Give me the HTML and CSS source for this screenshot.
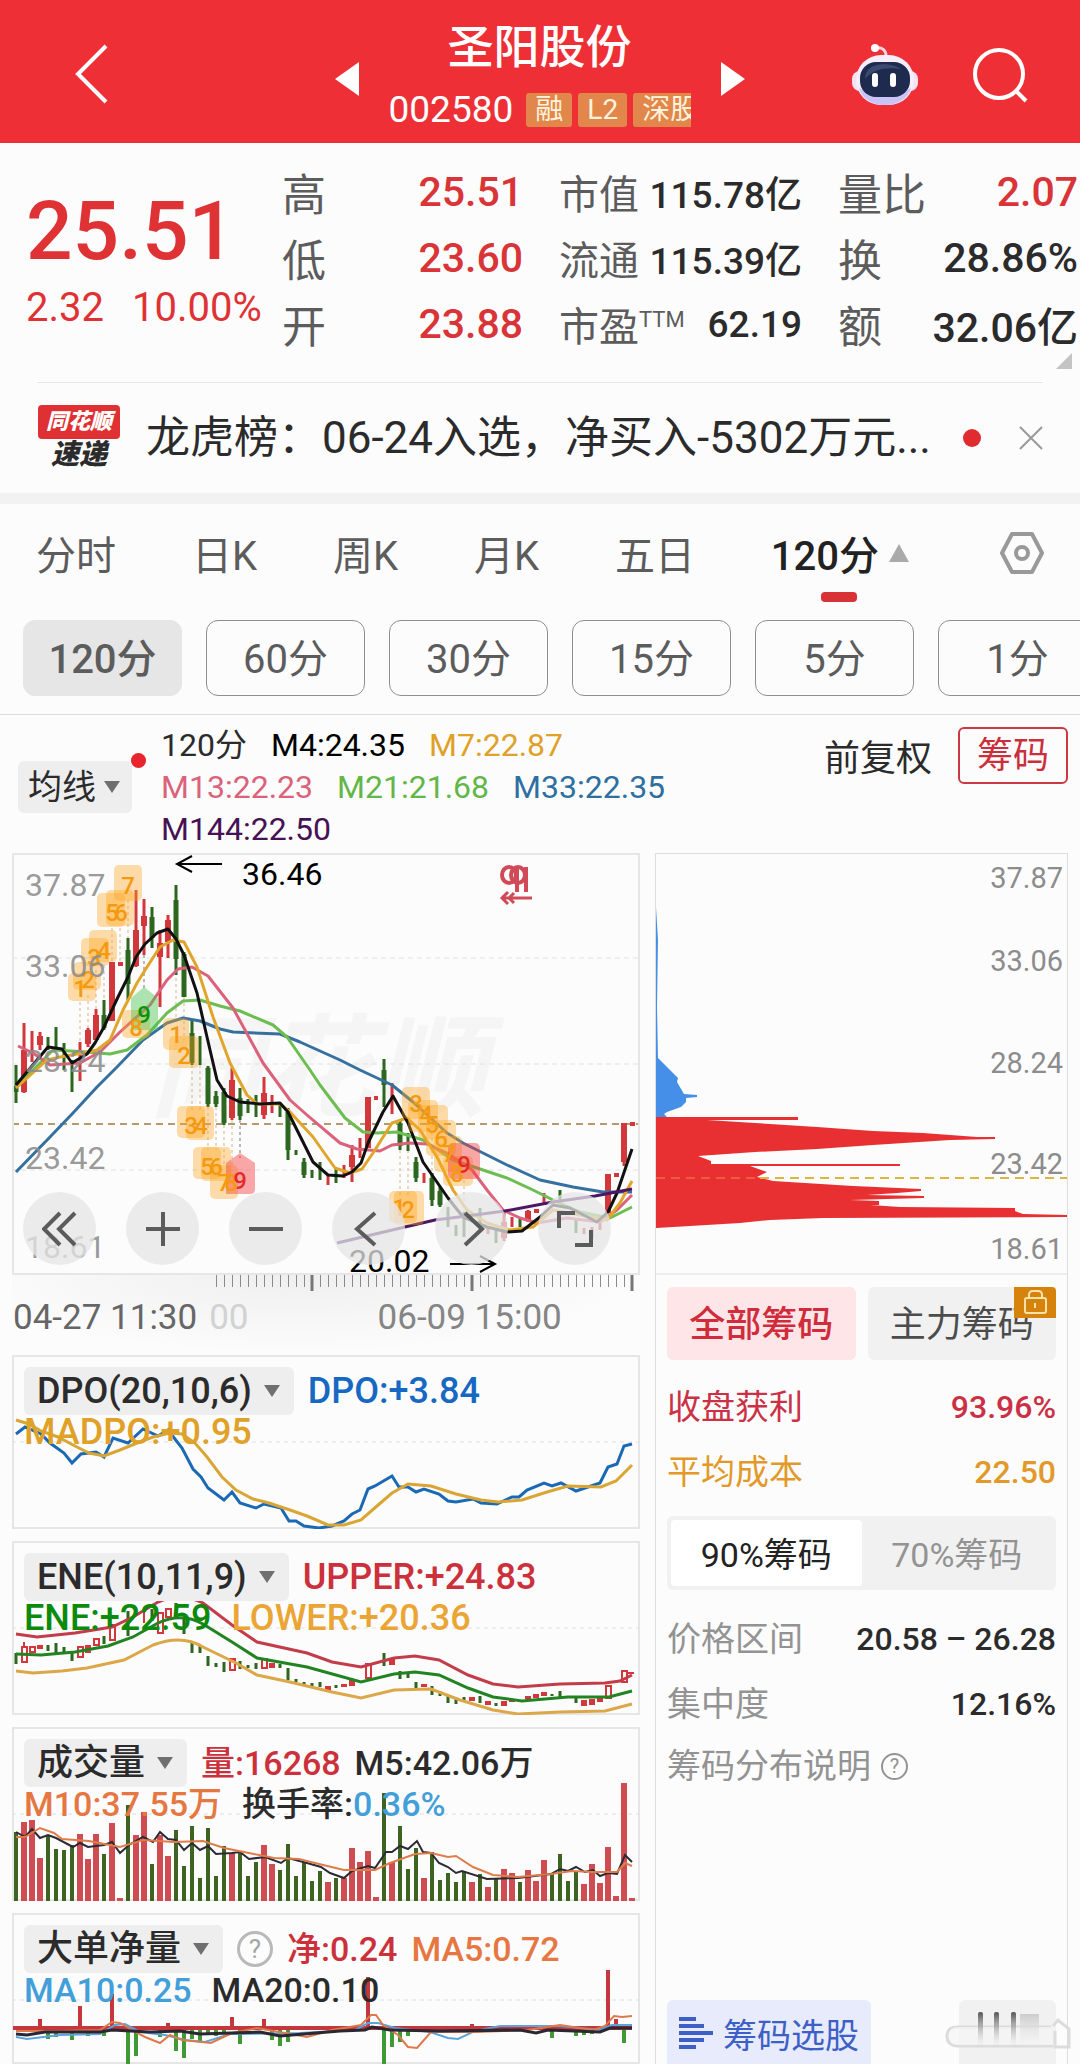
FILE: index.html
```html
<!DOCTYPE html>
<html lang="zh-CN">
<head>
    <meta charset="UTF-8">
    <meta name="viewport" content="width=device-width, initial-scale=1.0">
    <title>圣阳股份 002580</title>
    <link rel="stylesheet" href="styles.css">
</head>
<body>
    <header class="topbar">
        <div class="topbar-left">
            <button class="icon-btn" aria-label="返回">
                <svg width="34" height="60" viewBox="0 0 34 60"><path d="M31 2 3 30l28 28" fill="none" stroke="#fff" stroke-width="4"/></svg>
            </button>
        </div>
        <div class="stock-switch">
            <button class="icon-btn" aria-label="上一只">
                <svg width="24" height="34" viewBox="0 0 24 34"><path d="M24 0v34L0 17z" fill="#fff"/></svg>
            </button>
            <div class="stock-title">
                <h1>圣阳股份</h1>
                <div class="stock-code">
                    <span class="code">002580</span>
                    <span class="tag">融</span>
                    <span class="tag">L2</span>
                    <span class="tag">深股通</span>
                </div>
            </div>
            <button class="icon-btn" aria-label="下一只">
                <svg width="24" height="34" viewBox="0 0 24 34"><path d="M0 0v34l24-17z" fill="#fff"/></svg>
            </button>
        </div>
        <div class="topbar-right">
            <button class="icon-btn" aria-label="智能助手">
                <svg width="68" height="64" viewBox="0 0 68 64">
                    <path d="M35 13c0-6-4-9-10-8" fill="none" stroke="#fbd3dc" stroke-width="3"/>
                    <circle cx="24" cy="5" r="4" fill="#fff"/>
                    <rect x="1" y="28" width="66" height="20" rx="8" fill="#f3e2f4"/>
                    <rect x="5" y="12" width="58" height="50" rx="25" fill="#f6eefb"/>
                    <path d="M8 44c8 12 44 12 52 0-4 24-48 24-52 0z" fill="#c9c4f5"/>
                    <rect x="9" y="19" width="50" height="35" rx="16" fill="#1f2a4f"/>
                    <path d="M14 36c0-18 26-17 36-10-14-2-28 0-36 10z" fill="#3d4a70"/>
                    <rect x="21" y="30" width="6" height="14" rx="3" fill="#fff"/>
                    <rect x="39" y="30" width="6" height="14" rx="3" fill="#fff"/>
                </svg>
            </button>
            <button class="icon-btn" aria-label="搜索">
                <svg width="56" height="56" viewBox="0 0 56 56" fill="none" stroke="#fff" stroke-width="4"><circle cx="27" cy="27" r="24"/><path d="m44 44 10 10"/></svg>
            </button>
        </div>
    </header>

    <section class="quote">
        <div class="price-box">
            <div class="price">25.51</div>
            <div class="change"><span>2.32</span><span>10.00%</span></div>
        </div>
        <dl class="stats">
            <div><dt>高</dt><dd class="red">25.51</dd></div>
            <div><dt>低</dt><dd class="red">23.60</dd></div>
            <div><dt>开</dt><dd class="red">23.88</dd></div>
        </dl>
        <dl class="stats stats-cap">
            <div><dt>市值</dt><dd>115.78亿</dd></div>
            <div><dt>流通</dt><dd>115.39亿</dd></div>
            <div><dt>市盈<sup>TTM</sup></dt><dd>62.19</dd></div>
        </dl>
        <dl class="stats stats-vol">
            <div><dt>量比</dt><dd class="red">2.07</dd></div>
            <div><dt>换</dt><dd>28.86%</dd></div>
            <div><dt>额</dt><dd>32.06亿</dd></div>
        </dl>
        <svg class="expand" width="16" height="16" viewBox="0 0 16 16"><path d="M16 0v16H0z" fill="#c4c4c4"/></svg>
    </section>

    <section class="news">
        <div class="news-logo">
            <span class="logo-top">同花顺</span>
            <span class="logo-bottom">速递</span>
        </div>
        <a href="#" class="news-text">龙虎榜：06-24入选，净买入-5302万元...</a>
        <span class="news-dot"></span>
        <button class="icon-btn" aria-label="关闭">
            <svg width="24" height="24" viewBox="0 0 24 24"><path d="m1 1 22 22M23 1 1 23" stroke="#999" stroke-width="2"/></svg>
        </button>
    </section>

    <nav class="tabs">
        <button>分时</button>
        <button>日K</button>
        <button>周K</button>
        <button>月K</button>
        <button>五日</button>
        <button class="active">120分<svg width="20" height="18" viewBox="0 0 20 18"><path d="M10 0l10 18H0z" fill="#aaa"/></svg></button>
        <button class="setting" aria-label="设置">
            <svg width="46" height="44" viewBox="0 0 46 44" fill="none" stroke="#999" stroke-width="4"><path d="M13 3h20l10 19-10 19H13L3 22z" stroke-linejoin="round"/><circle cx="23" cy="22" r="6"/></svg>
        </button>
    </nav>

    <div class="periods">
        <button class="active">120分</button>
        <button>60分</button>
        <button>30分</button>
        <button>15分</button>
        <button>5分</button>
        <button>1分</button>
    </div>

    <section class="ma-bar">
        <button class="drop ma-drop">均线<i class="caret"></i></button>
        <div class="ma-list">
            <div><span class="c-dark">120分</span><span class="c-black">M4:24.35</span><span class="c-gold">M7:22.87</span></div>
            <div><span class="c-pink">M13:22.23</span><span class="c-green">M21:21.68</span><span class="c-blue">M33:22.35</span></div>
            <div><span class="c-purple">M144:22.50</span></div>
        </div>
        <button class="adjust">前复权</button>
        <button class="chips-btn">筹码</button>
    </section>

    <main class="main">
        <div class="charts">
            <div class="kline">
                <svg class="plot" viewBox="12 3 628 422">
                    <text x="150" y="258" class="watermark">同花顺</text>
                    <g fill="none" stroke="#e2e2e2" stroke-width="1" stroke-dasharray="5 4">
                        <path d="M12 108H640M12 214H640M12 320H640"/>
                    </g>
                    <path d="M12 274H640" stroke="#b39b6b" stroke-width="2" stroke-dasharray="7 5"/>

                    <!-- signal guide lines -->
                    <path d="M80 152V192M88 145V178M96 120V160M104 115V150M112 78V112M120 78V112M128 50V88M176 110V170M184 147V190M192 215V262M200 215V262M208 257V300M216 257V300M224 275V315M232 270V315M400 300V345M408 300V345M432 270V323M464 330V362" stroke="#d9b48c" stroke-dasharray="3 3"/>
                    <path d="M144 105V140M240 270V308" stroke="#777" stroke-dasharray="3 3"/>

                    <!-- candles -->
                    <g stroke="#2d661e" stroke-width="3">
                        <path d="M16 215V253M48 187V200M56 177V200M64 193V220M72 210V242M104 150V180M128 88V150M152 57V98M176 35V125M184 102V147M192 170V215M200 186V215M208 216V257M216 241V257M224 238V275M240 238V270M248 249V263M256 245V267M280 253V267M288 258V310M296 300V305M304 308V328M312 320V328M320 312V330M336 319V333M384 209V257M400 270V300M408 283V301M416 307V332M432 323V356M440 337V357M448 357V377M456 375V386M464 362V387M480 358V380M496 380V393M520 369V377M560 340V353M576 370V383"/>
                        <path d="M16 236V242M104 165V178M128 100V134M152 67V88M176 50V109M184 104V147M192 183V213M208 218V254M216 246V254M224 242V273M240 248V266M288 262V300M304 312V325M384 220V235M400 274V296M416 312V328M432 328V350M440 341V355" stroke-width="5"/>
                    </g>
                    <g stroke="#d2373c" stroke-width="3">
                        <path d="M24 173V243M32 181V212M40 182V200M80 192V231M88 178V197M96 159V190M136 40V117M144 49V105M160 80V157M168 65V108M232 218V270M264 227V269M272 245V263M328 325V335M344 315V328M352 295V332M360 288V308M392 233V264M424 323V333M488 378V384M504 363V391M512 367V377M528 360V372M544 343V355M584 378V384M592 377V388M600 373V380M624 273V316"/>
                        <path d="M24 200V242M40 186V195M88 180V194M96 165V190M112 112V171M136 80V116M144 66V76M160 93V107M168 70V92M232 230V268M264 243V265M352 305V317M368 247V298M504 372V388M528 361V371M608 324V363M624 273V312" stroke-width="6"/>
                        <path d="M118 114h5M374 248h4M534 361h5M614 325h5M630 274h5" stroke-width="4"/>
                    </g>

                    <!-- moving averages -->
                    <g fill="none" stroke-width="3" stroke-linejoin="round">
                        <path stroke="#35709e" d="M16 322 50 287 73 263 97 237 117 217 143 190 167 173 183 168 200 171 220 179 233 182 280 184 300 192 340 210 360 220 392 235 413 252 447 283 463 293 507 315 540 330 573 337 603 342 632 342"/>
                        <path stroke="#6cbd52" d="M16 237 30 223 53 200 87 202 110 204 127 200 147 185 167 163 183 151 200 150 220 156 240 161 273 175 287 187 310 220 320 235 345 268 363 282 377 283 397 282 423 290 453 310 477 318 507 328 533 340 553 350 580 362 610 368 632 357"/>
                        <path stroke="#db627b" d="M18 196 33 203 50 215 80 213 100 202 120 182 150 155 167 130 178 119 192 117 208 126 233 158 263 213 290 250 307 265 340 293 357 299 380 301 392 295 410 293 427 294 447 303 472 320 487 340 503 360 520 368 537 373 567 368 600 372 617 360 632 345"/>
                        <path stroke="#e0a52b" d="M16 238 47 210 60 207 83 203 97 200 110 190 123 160 137 133 147 117 160 97 173 90 184 92 197 117 213 167 230 213 247 245 257 254 280 254 290 262 313 287 335 318 350 323 362 319 373 303 392 273 407 268 420 280 437 307 453 340 467 360 487 373 510 380 533 377 553 360 580 365 607 370 620 353 632 331"/>
                        <path stroke="#111" d="M16 235 48 197 62 199 72 213 87 204 95 193 104 177 118 147 128 127 136 107 145 94 157 83 168 79 176 89 184 105 197 143 207 187 217 230 227 246 240 252 260 254 280 253 288 262 302 290 313 312 328 325 343 326 352 322 361 313 368 293 383 262 393 246 408 273 423 312 448 348 463 367 487 377 507 382 522 381 540 367 553 355 570 358 597 372 608 362 617 343 632 299"/>
                        <path stroke="#4d1765" d="M337 393 405 377 435 370 467 366 505 361 553 352 595 346 632 339"/>
                    </g>

                    <!-- sequence badges -->
                    <g fill="#ffa51f" fill-opacity=".38">
                        <rect x="68" y="123" width="28" height="28" rx="5"/>
                        <rect x="73" y="112" width="28" height="28" rx="5"/>
                        <rect x="81" y="88" width="28" height="28" rx="5"/>
                        <rect x="89" y="80" width="28" height="32" rx="5"/>
                        <rect x="97" y="43" width="28" height="34" rx="5"/>
                        <rect x="106" y="40" width="28" height="36" rx="5"/>
                        <rect x="114" y="15" width="28" height="36" rx="5"/>
                        <rect x="122" y="160" width="28" height="28" rx="5"/>
                        <rect x="163" y="168" width="26" height="32" rx="5"/>
                        <rect x="169" y="186" width="30" height="32" rx="5"/>
                        <rect x="177" y="256" width="28" height="32" rx="5"/>
                        <rect x="186" y="256" width="28" height="34" rx="5"/>
                        <rect x="193" y="297" width="28" height="32" rx="5"/>
                        <rect x="201" y="297" width="30" height="34" rx="5"/>
                        <rect x="210" y="315" width="28" height="34" rx="5"/>
                        <rect x="389" y="341" width="28" height="32" rx="5"/>
                        <rect x="394" y="341" width="30" height="34" rx="5"/>
                        <rect x="402" y="237" width="28" height="32" rx="5"/>
                        <rect x="408" y="250" width="30" height="32" rx="5"/>
                        <rect x="418" y="255" width="30" height="34" rx="5"/>
                        <rect x="426" y="270" width="30" height="36" rx="5"/>
                        <rect x="434" y="286" width="28" height="36" rx="5"/>
                        <rect x="443" y="306" width="30" height="30" rx="5"/>
                    </g>
                    <path d="M131 148l13-11 14 11v32h-27z" fill="#4cc552" fill-opacity=".45"/>
                    <path d="M226 313l14-10 15 10v26q0 5-5 5h-24z" fill="#f5403f" fill-opacity=".45"/>
                    <rect x="448" y="293" width="32" height="36" rx="5" fill="#f5403f" fill-opacity=".45"/>
                    <g class="badge-num">
                        <text x="80" y="147">1</text><text x="88" y="138">2</text><text x="94" y="116">3</text><text x="104" y="109">4</text>
                        <text x="112" y="71">5</text><text x="121" y="71">6</text><text x="128" y="44">7</text><text x="136" y="186">8</text>
                        <text x="176" y="193">1</text><text x="184" y="214">2</text><text x="191" y="284">3</text><text x="201" y="284">4</text>
                        <text x="207" y="325">5</text><text x="216" y="325">6</text><text x="224" y="341">7</text><text x="231" y="341">8</text>
                        <text x="399" y="366">1</text><text x="408" y="368">2</text><text x="416" y="262">3</text><text x="426" y="273">4</text>
                        <text x="432" y="283">5</text><text x="441" y="297">6</text><text x="449" y="312">7</text><text x="457" y="332">8</text>
                        <text x="144" y="173" fill="#07930b">9</text>
                        <text x="240" y="339" fill="#e22a2a">9</text>
                        <text x="464" y="323" fill="#e22a2a">9</text>
                    </g>
                    <g class="axis-text">
                        <text x="25" y="46">37.87</text>
                        <text x="25" y="127">33.06</text>
                        <text x="25" y="222">28.24</text>
                        <text x="25" y="319">23.42</text>
                        <text x="25" y="408">18.61</text>
                    </g>
                    <text x="242" y="35" class="extreme">36.46</text>
                    <text x="349" y="422" class="extreme">20.02</text>
                    <path d="M222 14H177M192 6 177 14l15 8M450 414h45M480 406l15 8-15 8" fill="none" stroke="#000" stroke-width="2"/>
                    <g fill="none" stroke="#d04a58" stroke-width="4">
                        <ellipse cx="509" cy="25" rx="7" ry="8"/>
                        <ellipse cx="518" cy="25" rx="7" ry="8"/>
                        <path d="M517 17V42M526 17V42"/>
                        <path d="M532 48H502M508 42l-6 6 6 6M514 43l-5 5 5 5" stroke-width="3"/>
                    </g>
                    <rect x="13" y="4" width="626" height="420" fill="none" stroke="#e6e6e6" stroke-width="2"/>
                </svg>
                <div class="chart-tools">
                    <button aria-label="最左"><svg viewBox="0 0 36 36"><path d="M18 2 2 18l16 16M33 2 17 18l16 16"/></svg></button>
                    <button aria-label="放大"><svg viewBox="0 0 36 36"><path d="M1 18h34M18 1v34"/></svg></button>
                    <button aria-label="缩小"><svg viewBox="0 0 36 36"><path d="M1 18h34"/></svg></button>
                    <button aria-label="左移"><svg viewBox="0 0 36 36"><path d="M24 2 6 18l18 16"/></svg></button>
                    <button aria-label="右移"><svg viewBox="0 0 36 36"><path d="m11 2 17 16-17 16"/></svg></button>
                    <button aria-label="全屏"><svg viewBox="0 0 36 36"><path d="M2 17V2h16M34 19v15H18"/></svg></button>
                </div>
            </div>

            <div class="time-axis">
                <svg class="ticks" viewBox="0 0 628 16">
                    <path d="M204 6H620" stroke="#8a8a8a" stroke-width="12" stroke-dasharray="1 7"/>
                    <path d="M300 0v16M460 0v16M620 0v16" stroke="#777" stroke-width="3"/>
                </svg>
                <span>04-27 11:30</span>
                <span class="ghost">00</span>
                <span class="second">06-09 15:00</span>
            </div>

            <div class="panel">
                <svg class="plot" viewBox="12 0 628 174">
                    <path d="M12 87H640" stroke="#e0e0e0" stroke-dasharray="4 4"/>
                    <g fill="none" stroke-width="3">
                        <path stroke="#1a69b4" d="M16 79 25 72 41 79 50 88 64 98 72 108 81 99 96 97 104 102 113 83 128 88 143 74 158 81 168 75 182 93 193 114 201 122 208 133 224 145 232 137 240 148 256 153 264 149 281 153 289 166 296 166 304 171 319 173 332 171 344 166 352 159 360 155 368 134 375 131 392 121 399 132 408 132 416 137 424 134 439 139 448 146 456 147 473 144 481 148 497 149 512 142 519 142 527 135 544 128 552 131 561 128 576 136 600 128 608 112 617 109 624 91 632 89"/>
                        <path stroke="#d9a636" d="M16 65 29 69 41 76 58 82 75 91 89 98 104 101 120 95 137 88 153 82 170 78 182 79 195 88 207 102 222 122 236 135 253 144 269 148 290 155 307 161 328 170 344 170 361 165 377 151 392 138 408 129 431 131 456 139 481 145 498 147 522 145 547 137 568 131 601 132 616 126 632 110"/>
                    </g>
                </svg>
                <div class="legend">
                    <div><button class="drop">DPO(20,10,6)<i class="caret"></i></button><span class="c-dpo">DPO:+3.84</span></div>
                    <div><span class="c-gold">MADPO:+0.95</span></div>
                </div>
            </div>

            <div class="panel">
                <svg class="plot" viewBox="12 0 628 174">
                    <path d="M12 87H640" stroke="#e0e0e0" stroke-dasharray="4 4"/>
                    <path stroke="#2d661e" stroke-width="3" d="M16 112V123M48 104V110M56 102V112M64 106V113M72 111V120M104 95V103M128 70V95M152 68V80M176 62V76M184 78V93M192 102V112M200 104V112M208 115V125M216 122V126M224 121V131M240 120V128M248 124V127M256 122V128M280 123V127M288 127V139M296 138V141M304 141V145M312 142V145M320 141V146M336 144V147M384 112V125M400 130V138M408 132V137M416 141V147M432 145V154M440 150V155M448 154V162M456 158V163M464 156V160M480 155V162M496 162V165M552 153V155M560 150V157M576 157V162"/>
                    <path stroke="#d2373c" stroke-width="6" d="M40 104V108M88 104V112M272 122V127M328 145V150M344 143V146M352 139V145M392 118V124M424 143V146M472 156V160M488 160V164M504 160V165M512 159V161M528 155V158M536 153V157M544 151V155M584 159V165M592 158V164M600 156V161M631 131V133"/>
                    <path fill="none" stroke="#d2373c" stroke-width="2" d="M22 106h5v15h-5zM24 101v5M30 106h5v5h-5zM78 106h5v10h-5zM94 98h5v6h-5zM110 84h5v15h-5zM144 66V82M158 72h5v20h-5zM166 68h5v8h-5zM230 118h5v11h-5zM262 118h5v9h-5zM366 123h5v14h-5zM606 145h5v12h-5zM622 130h5v11h-5z"/>
                    <g fill="none" stroke-width="3">
                        <path stroke="#c33c49" d="M16 93 37 96 75 92 112 86 133 76 158 61Q182 51 203 62L232 84 257 101 307 112 332 121 361 126 394 117 415 115 439 119 468 134 493 143 518 146 560 143 605 142 620 140 632 134"/>
                        <path stroke="#218321" d="M16 113 41 114 75 111 108 105 133 96 158 82Q182 71 203 83L232 101 257 117 307 126 361 141 394 133 415 131 439 134 468 147 493 156 522 160 568 156 609 156 632 150"/>
                        <path stroke="#dca748" d="M16 130 33 132 62 130 87 127 124 119 153 104Q182 93 203 106L236 122 257 134 290 141 332 151 361 157 394 149 431 148 460 159 493 169 518 173 560 171 605 170 632 163"/>
                    </g>
                </svg>
                <div class="legend">
                    <div><button class="drop">ENE(10,11,9)<i class="caret"></i></button><span class="c-upper">UPPER:+24.83</span></div>
                    <div><span class="c-ene">ENE:+22.59</span><span class="c-lower">LOWER:+20.36</span></div>
                </div>
            </div>

            <div class="panel">
                <svg class="plot" viewBox="12 0 628 174">
                    <path d="M12 87H640" stroke="#e0e0e0" stroke-dasharray="4 4"/>
                    <path stroke="#3d6420" stroke-width="4" d="M16 174V105M48 174V108M56 174V122M64 174V123M72 174V118M104 174V127M128 174V78M152 174V137M176 174V103M184 174V139M192 174V99M200 174V151M208 174V101M216 174V149M224 174V119M240 174V126M248 174V149M256 174V135M280 174V143M288 174V117M296 174V149M304 174V135M312 174V154M320 174V144M336 174V151M384 174V66M400 174V99M408 174V142M416 174V121M432 174V125M440 174V153M448 174V146M456 174V155M464 174V144M480 174V147M496 174V151M520 174V155M552 174V146M560 174V127M568 174V154M576 174V144"/>
                    <path stroke="#cf4c52" stroke-width="6" d="M24 174V95M32 174V93M40 174V131M80 174V107M88 174V132M96 174V107M112 174V96M120 174V171M136 174V108M144 174V85M160 174V108M168 174V129M232 174V126M264 174V118M272 174V137M328 174V155M344 174V151M352 174V121M360 174V135M368 174V124M376 174V170M392 174V135M424 174V151M472 174V155M488 174V160M504 174V142M512 174V146M528 174V143M536 174V154M544 174V133M584 174V157M592 174V137M600 174V156M608 174V120M616 174V169M624 174V56M632 174V171"/>
                    <g fill="none" stroke-width="2">
                        <path stroke="#2c2a35" d="M16 105 25 110 32 102 40 111 48 108 56 111 73 120 80 116 88 120 104 118 112 115 120 126 129 118 143 110 153 115 160 105 168 112 176 113 184 123 192 116 200 123 208 119 216 127 232 126 240 125 249 132 265 130 281 136 288 131 307 136 321 140 330 146 344 151 352 144 368 139 375 141 386 125 392 125 400 119 408 122 417 114 423 125 431 126 439 136 448 140 456 146 462 144 487 152 518 151 551 147 560 142 568 144 576 140 585 145 593 143 600 149 608 146 617 147 625 128 632 135"/>
                        <path stroke="#e07c49" d="M16 110 25 110 40 101 54 106 62 112 89 114 120 120 143 113 174 115 203 114 224 121 249 126 274 131 299 132 319 137 344 143 375 143 390 136 415 127 431 126 448 130 456 129 473 140 493 148 518 150 551 147 572 144 593 145 617 145 625 136 632 139"/>
                    </g>
                </svg>
                <div class="legend legend-cn">
                    <div><button class="drop">成交量<i class="caret"></i></button><span class="c-upper">量:16268</span><span class="c-dark">M5:42.06万</span></div>
                    <div><span class="c-orange">M10:37.55万</span><span class="c-dark">换手率:<b class="c-sky">0.36%</b></span></div>
                </div>
            </div>

            <div class="panel panel-last">
                <svg class="plot" viewBox="12 0 628 151">
                    <path d="M12 87H640" stroke="#e0e0e0" stroke-dasharray="4 4"/>
                    <path stroke="#3f9a34" stroke-width="4" d="M48 117V126M56 117V124M72 117V127M88 117V123M104 117V123M128 117V151M136 117V143M160 117V124M176 117V138M184 117V145M192 117V126M200 117V128M208 117V122M216 117V123M224 117V121M240 117V131M272 117V127M280 117V133M288 117V129M384 117V151M392 117V134M400 117V129M408 117V123M552 117V125M576 117V123M584 117V122M592 117V121M624 117V130"/>
                    <path stroke="#c4373c" stroke-width="4" d="M13 115H632M40 115V106M80 115V93M112 115V81M168 115V110M232 115V104M264 115V106M368 115V64M472 115V111M608 115V57M616 115V106"/>
                    <g fill="none" stroke-width="2">
                        <path stroke="#5aa5dc" d="M16 124 27 126 60 122 100 121 115 112 125 111 140 119 165 122 185 127 205 129 230 121 300 120 355 117 368 110 378 110 395 115 430 119 448 125 458 126 475 118 500 113 560 113 600 117 612 112 632 112"/>
                        <path stroke="#dd7a4c" d="M16 118 60 118 100 117 112 109 120 110 132 117 145 124 160 130 170 122 182 127 211 130 232 120 257 115 307 124 332 117 361 112 371 102 376 102 383 112 398 122 408 134 417 135 431 119 477 119 527 117 560 112 593 117 605 113 614 103 622 104 632 103"/>
                        <path stroke="#2b2632" stroke-width="3" d="M16 121 27 122 45 119 100 119 112 117 150 119 180 118 200 121 260 119 280 123 340 118 365 117 372 114 390 117 440 118 520 117 536 120 548 117 600 119 610 115 632 115"/>
                    </g>
                </svg>
                <div class="legend legend-cn">
                    <div>
                        <button class="drop">大单净量<i class="caret"></i></button>
                        <button class="help" aria-label="说明">?</button>
                        <span class="c-upper">净:0.24</span><span class="c-orange">MA5:0.72</span>
                    </div>
                    <div><span class="c-sky">MA10:0.25</span><span class="c-dark">MA20:0.10</span></div>
                </div>
            </div>
        </div>

        <aside class="chips">
            <svg class="chips-plot" viewBox="656 4 411 421">
                <path fill="#458fe8" d="M656 57 658 90 657 157 658 208 678 228 677 232 684 244 697 245V247L686 248V252L681 257 667 262 664 264 667 267H656z"/>
                <path fill="#e82f31" d="M656 267H798V270H707L755 273 817 277 873 281 923 283 977 287H995V289L950 290 873 295 817 299 755 302 698 306 711 311V314H900V316H750L767 322 757 327 773 331 853 336 921 339V341L897 343 867 345 924 346V348L850 350 879 351V355H870L900 357 1015 358V361L1023 364 1067 365V367L823 368 770 370 740 373 690 376 656 378z"/>
                <path d="M656 328H760" stroke="#f08a4a" stroke-width="1" stroke-dasharray="9 6"/>
                <path d="M760 328H1067" stroke="#ddb640" stroke-width="2" stroke-dasharray="9 6"/>
                <g class="chips-axis">
                    <text x="1063" y="38">37.87</text>
                    <text x="1063" y="121">33.06</text>
                    <text x="1063" y="223">28.24</text>
                    <text x="1063" y="324">23.42</text>
                    <text x="1063" y="409">18.61</text>
                </g>
                <path d="M656 424H1067" stroke="#ddd"/>
            </svg>

            <div class="chips-body">
                <div class="chips-tabs">
                    <button class="active">全部筹码</button>
                    <button>主力筹码
                        <svg class="lock" width="42" height="31" viewBox="0 0 42 31"><path d="M0 0h38q4 0 4 4v27H0z" fill="#d6830e"/><g fill="none" stroke="#ffe2a8" stroke-width="2"><rect x="11" y="11" width="21" height="15" rx="2"/><path d="M15 11V8q0-4 4-4h5q4 0 4 4v3M21 16v5"/></g></svg>
                    </button>
                </div>
                <dl class="chips-rows">
                    <div class="crimson"><dt>收盘获利</dt><dd>93.96%</dd></div>
                    <div class="amber"><dt>平均成本</dt><dd>22.50</dd></div>
                </dl>
                <div class="segment">
                    <button class="active">90%筹码</button>
                    <button>70%筹码</button>
                </div>
                <dl class="chips-rows">
                    <div><dt>价格区间</dt><dd>20.58 – 26.28</dd></div>
                    <div><dt>集中度</dt><dd>12.16%</dd></div>
                </dl>
                <a href="#" class="explain">筹码分布说明<span>?</span></a>
                <div class="chips-foot">
                    <button class="pick">
                        <svg width="34" height="32" viewBox="0 0 34 32" stroke="#3d60c6" stroke-width="4"><path d="M0 2h17M0 9h25M0 16h34M0 23h25M0 30h17"/></svg>筹码选股
                    </button>
                    <button class="layout" aria-label="布局">
                        <svg width="126" height="44" viewBox="0 0 126 44">
                            <defs>
                                <linearGradient id="fade" x1="0" y1="0" x2="0" y2="1">
                                    <stop offset="0" stop-color="#555"/>
                                    <stop offset="1" stop-color="#ddd" stop-opacity="0"/>
                                </linearGradient>
                                <linearGradient id="fade2" x1="0" y1="0" x2="0" y2="1">
                                    <stop offset="0" stop-color="#ccc"/>
                                    <stop offset="1" stop-color="#eee" stop-opacity="0"/>
                                </linearGradient>
                            </defs>
                            <path d="M106 17H12q-10 0-10 9t10 10h96M108 16l5-6 11 9v18h-14V21" fill="none" stroke="#dcdcdc" stroke-width="3"/>
                            <path d="M106 17H12q-8 0-8 9t8 9h96" fill="#f5f5f5" fill-opacity=".7"/>
                            <g fill="url(#fade)">
                                <rect x="33" y="2" width="5" height="36" rx="2"/>
                                <rect x="49" y="2" width="5" height="36" rx="2"/>
                                <rect x="66" y="2" width="5" height="36" rx="2"/>
                            </g>
                            <rect x="75" y="4" width="19" height="34" fill="url(#fade2)"/>
                        </svg>
                    </button>
                </div>
            </div>
        </aside>
    </main>
</body>
</html>
```
FILE: styles.css
```css
* {
    box-sizing: border-box;
}
body {
    margin: 0;
    background-color: #fcfcfc;
    color: #2b2b2b;
    font-family: Roboto, "Noto Sans CJK SC", sans-serif;
    overflow-x: hidden;
}
button {
    font-family: inherit;
    color: inherit;
    background: none;
    border: none;
    padding: 0;
    cursor: pointer;
}
svg {
    display: block;
}
dl, dd, h1 {
    margin: 0;
}
a {
    color: inherit;
    text-decoration: none;
}

/* top bar */
.topbar {
    display: grid;
    grid-template-columns: 1fr auto 1fr;
    align-items: center;
    height: 143px;
    padding: 0 52px 0 75px;
    background-color: #ee2f36;
    color: #fff;
}
.topbar-left {
    padding-top: 8px;
}
.topbar-right {
    display: flex;
    justify-content: flex-end;
    align-items: center;
    gap: 53px;
    padding-top: 6px;
}
.stock-switch {
    display: flex;
    align-items: center;
    gap: 30px;
    padding-top: 14px;
    margin-right: 24px;
}
.stock-title {
    width: 302px;
}
.stock-title h1 {
    font-size: 46px;
    font-weight: 500;
    line-height: 62px;
    text-align: center;
}
.stock-code {
    display: flex;
    align-items: center;
    gap: 6px;
    overflow: hidden;
    height: 64px;
}
.code {
    font-size: 37px;
    margin-right: 7px;
}
.tag {
    flex-shrink: 0;
    padding: 0 9px;
    border-radius: 3px;
    background-color: #e2874b;
    font-size: 28px;
    line-height: 34px;
    color: #fff3dc;
}

/* quote */
.quote {
    position: relative;
    display: grid;
    grid-template-columns: 238px 259px 279px 1fr;
    padding: 16px 2px 0 26px;
    height: 240px;
}
.quote::after {
    content: "";
    position: absolute;
    left: 37px;
    right: 37px;
    bottom: 0;
    height: 1px;
    background-color: #e6e6e6;
}
.price-box {
    color: #df3235;
    padding-top: 22px;
}
.price {
    font-size: 82px;
    font-weight: 500;
    line-height: 100px;
}
.change {
    display: flex;
    gap: 28px;
    font-size: 40px;
    line-height: 54px;
}
.stats {
    padding-left: 18px;
}
.stats > div {
    display: flex;
    justify-content: space-between;
    align-items: center;
    height: 66px;
}
.stats dt {
    font-size: 44px;
    color: #5c5c5c;
    white-space: nowrap;
}
.stats dd {
    font-size: 41px;
    font-weight: 500;
    white-space: nowrap;
}
.stats-cap, .stats-vol {
    padding-left: 36px;
}
.stats-cap dt {
    font-size: 40px;
}
.stats-cap dd {
    font-size: 37px;
}
.stats-cap sup {
    font-size: 22px;
    line-height: 0;
    vertical-align: 14px;
}
.red {
    color: #d93438;
}
.expand {
    position: absolute;
    right: 8px;
    bottom: 14px;
}

/* news */
.news {
    display: flex;
    align-items: center;
    height: 121px;
    padding: 0 37px 0 38px;
    border-bottom: 11px solid #f2f2f2;
}
.news-logo {
    width: 82px;
    margin-right: 26px;
    text-align: center;
    font-style: italic;
    font-weight: 900;
}
.logo-top {
    display: block;
    border-radius: 4px;
    background-color: #df3033;
    color: #fff;
    font-size: 22px;
    line-height: 34px;
}
.logo-bottom {
    display: block;
    font-size: 28px;
    line-height: 32px;
}
.news-text {
    flex: 1;
    font-size: 44px;
    line-height: 60px;
    white-space: nowrap;
}
.news-dot {
    width: 18px;
    height: 18px;
    margin-right: 38px;
    border-radius: 50%;
    background-color: #e02b30;
}

/* tabs */
.tabs {
    display: flex;
    justify-content: space-between;
    align-items: center;
    height: 104px;
    padding: 0 35px 6px 36px;
}
.tabs button {
    position: relative;
    display: flex;
    align-items: center;
    gap: 10px;
    font-size: 40px;
    color: #5c5c5c;
}
.tabs .active {
    font-weight: 500;
    color: #222;
}
.tabs .setting {
    margin-left: 14px;
}
.tabs .active::after {
    content: "";
    position: absolute;
    left: 50px;
    bottom: -20px;
    width: 36px;
    height: 10px;
    border-radius: 4px;
    background-color: #d93236;
}
.periods {
    display: flex;
    gap: 24px;
    padding: 12px 0 18px 23px;
    border-bottom: 1px solid #dcdcdc;
    overflow: hidden;
}
.periods button {
    flex: 0 0 159px;
    height: 76px;
    padding-bottom: 4px;
    border: 1px solid #8f8f8f;
    border-radius: 12px;
    font-size: 40px;
    color: #5c5c5c;
}
.periods .active {
    border-color: #e6e6e6;
    background-color: #e6e6e6;
    font-weight: 500;
}

/* moving average bar */
.drop {
    display: inline-flex;
    align-items: center;
    gap: 12px;
    height: 48px;
    padding: 0 14px 0 13px;
    border-radius: 6px;
    background-color: #eee;
    font-size: 36px;
    font-weight: 500;
    line-height: 44px;
    color: #2b2b2b;
    white-space: nowrap;
}
.caret {
    border: 8px solid transparent;
    border-top: 12px solid #6f6f6f;
    border-bottom: none;
}
.ma-bar {
    display: flex;
    align-items: flex-start;
    height: 138px;
    padding: 9px 12px 0 18px;
}
.ma-drop {
    position: relative;
    height: 52px;
    margin: 37px 29px 0 0;
    padding: 0 12px 0 10px;
    gap: 8px;
    font-size: 34px;
    font-weight: 400;
}
.ma-drop::after {
    content: "";
    position: absolute;
    top: -8px;
    right: -14px;
    width: 15px;
    height: 15px;
    border-radius: 50%;
    background-color: #e8252c;
}
.ma-list {
    flex: 1;
    font-size: 32px;
    line-height: 42px;
}
.ma-list div {
    display: flex;
    gap: 24px;
}
.adjust {
    margin: 11px 26px 0 0;
    font-size: 36px;
    line-height: 48px;
}
.chips-btn {
    width: 110px;
    height: 57px;
    margin-top: 3px;
    border: 2px solid #cc3943;
    border-radius: 6px;
    font-size: 36px;
    line-height: 48px;
    color: #cc2f3c;
}

.c-dark { color: #2b2b2b; }
.c-black { color: #000; }
.c-gold { color: #dfa128; }
.c-pink { color: #db627b; }
.c-green { color: #62b748; }
.c-blue { color: #2c6fa0; }
.c-purple { color: #471254; }
.c-dpo { color: #1668c2; }
.c-upper { color: #cc303b; }
.c-ene { color: #0b8a0b; }
.c-lower { color: #eaa535; }
.c-orange { color: #e67742; }
.c-sky { color: #439fd9; }

/* charts */
.main {
    display: grid;
    grid-template-columns: 628fr 413fr;
    gap: 15px;
    padding: 0 12px;
}
.plot {
    width: 100%;
    height: auto;
}
.kline {
    position: relative;
}
.watermark {
    font-size: 112px;
    font-weight: 700;
    font-style: italic;
    fill: #f5f5f5;
}
.axis-text {
    font-size: 32px;
    fill: #8c8c8c;
    fill-opacity: .9;
}
.extreme {
    font-size: 32px;
    fill: #000;
}
.badge-num {
    font-size: 24px;
    font-weight: 500;
    text-anchor: middle;
    fill: #f59a10;
}
.chart-tools {
    position: absolute;
    left: 11px;
    bottom: 10px;
    display: flex;
    gap: 30px;
}
.chart-tools button {
    display: flex;
    align-items: center;
    justify-content: center;
    width: 73px;
    height: 73px;
    border-radius: 50%;
    background-color: rgba(230, 230, 230, 0.75);
}
.chart-tools svg {
    width: 36px;
    height: 36px;
    fill: none;
    stroke: #5b5b5b;
    stroke-width: 4;
}
.time-axis {
    position: relative;
    display: flex;
    height: 80px;
    padding: 20px 0 0 1px;
    font-size: 35px;
    line-height: 46px;
    color: #666;
    background: radial-gradient(ellipse at 45% 0, #efefef, #fcfcfc 70%);
}
.ticks {
    position: absolute;
    left: 0;
    top: 0;
    width: 100%;
}
.time-axis .ghost {
    margin-left: 12px;
    color: #d2d2d2;
}
.time-axis .second {
    margin-left: 129px;
    color: #858585;
}
.panel {
    position: relative;
    margin-bottom: 12px;
    box-shadow: inset 0 0 0 2px #e6e6e6;
}
.panel-last {
    margin-bottom: 0;
}
.legend {
    position: absolute;
    left: 12px;
    top: 12px;
    font-size: 36px;
    font-weight: 500;
    white-space: nowrap;
}
.legend div {
    display: flex;
    align-items: center;
    gap: 14px;
    height: 48px;
}
.legend div + div {
    gap: 20px;
    height: 34px;
}
.legend b {
    font-weight: 500;
}
.legend-cn {
    font-size: 34px;
    line-height: 34px;
}
.help {
    width: 36px;
    height: 36px;
    border: 3px solid #b9b9b9;
    border-radius: 50%;
    font-size: 26px;
    line-height: 28px;
    color: #a5a5a5;
}

/* chip distribution */
.chips {
    display: flex;
    flex-direction: column;
    border: 1px solid #ddd;
    border-bottom: none;
}
.chips-plot {
    width: 100%;
}
.chips-axis {
    font-size: 29px;
    text-anchor: end;
    fill: #8c8c8c;
}
.chips-body {
    flex: 1;
    display: flex;
    flex-direction: column;
    padding: 12px 11px 0;
}
.chips-tabs {
    display: flex;
    gap: 12px;
}
.chips-tabs button {
    position: relative;
    flex: 1;
    height: 73px;
    padding-bottom: 5px;
    border-radius: 6px;
    background-color: #f1f1f1;
    font-size: 36px;
    color: #4c4c4c;
}
.chips-tabs .active {
    background-color: #fde5e8;
    color: #d02c3b;
    font-weight: 500;
}
.lock {
    position: absolute;
    top: 0;
    right: 0;
}
.chips-rows {
    padding: 14px 0 12px;
}
.chips-rows div {
    display: flex;
    justify-content: space-between;
    align-items: center;
    height: 65px;
}
.chips-rows dt {
    font-size: 34px;
    line-height: 48px;
    color: #939393;
}
.chips-rows dd {
    font-size: 32px;
    font-weight: 500;
}
.chips-rows .crimson, .chips-rows .crimson dt {
    color: #cb3045;
}
.chips-rows .amber, .chips-rows .amber dt {
    color: #e2992a;
}
.segment {
    display: flex;
    height: 74px;
    margin-bottom: 2px;
    padding: 4px;
    border-radius: 6px;
    background-color: #f1f1f1;
}
.segment button {
    flex: 1;
    padding-bottom: 2px;
    border-radius: 4px;
    font-size: 34px;
    color: #939393;
}
.segment .active {
    background-color: #fff;
    color: #222;
}
.explain {
    display: flex;
    align-items: center;
    gap: 10px;
    margin-top: -14px;
    font-size: 34px;
    line-height: 64px;
    color: #939393;
}
.explain span {
    width: 27px;
    height: 27px;
    border: 2px solid #939393;
    border-radius: 50%;
    font-size: 20px;
    line-height: 23px;
    text-align: center;
}
.chips-foot {
    display: flex;
    justify-content: space-between;
    margin-top: auto;
}
.pick {
    display: flex;
    align-items: center;
    gap: 10px;
    height: 64px;
    padding: 2px 12px 0;
    border-radius: 6px 6px 0 0;
    background-color: #e7ebfb;
    font-size: 34px;
    color: #3d60c6;
}
.layout {
    display: flex;
    justify-content: center;
    align-items: center;
    width: 97px;
    height: 64px;
    border-radius: 6px 6px 0 0;
    background-color: #f1f1f1;
}
.layout svg {
    flex-shrink: 0;
}
```
